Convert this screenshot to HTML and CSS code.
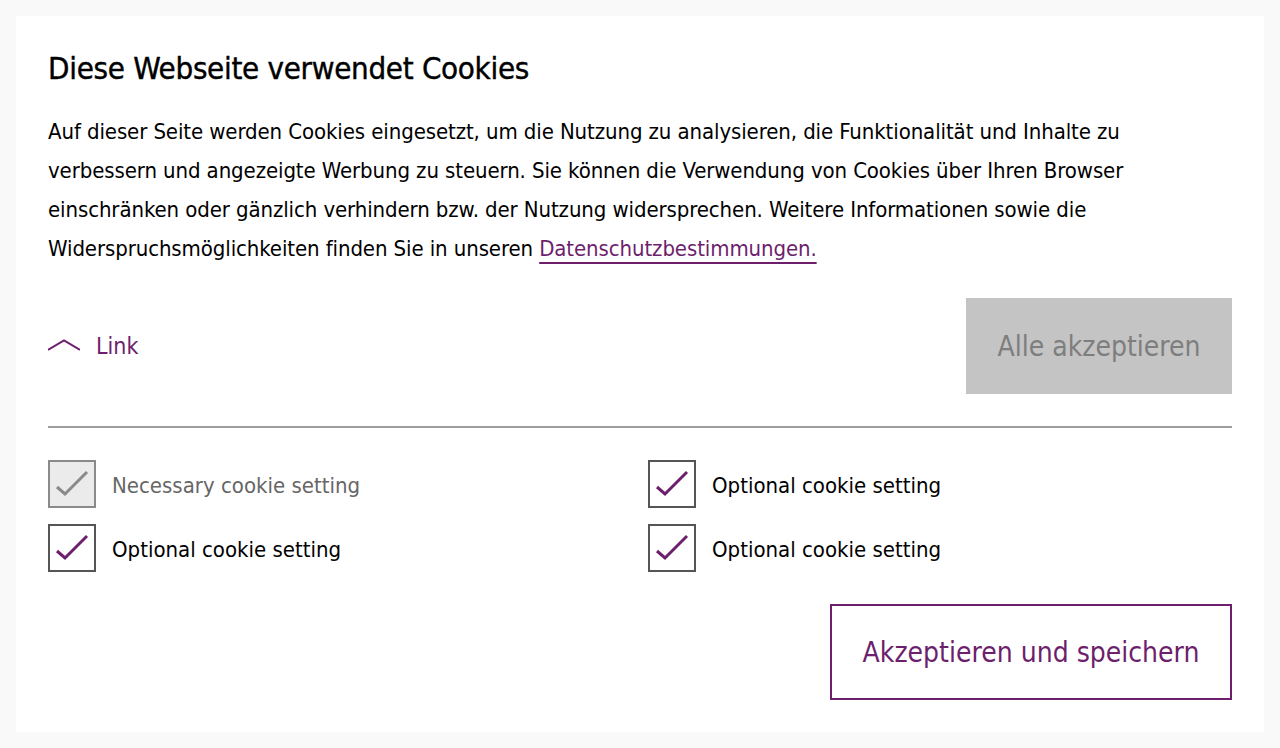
FILE: index.html
```html
<!DOCTYPE html>
<html lang="de">
<head>
<meta charset="utf-8">
<title>Cookies</title>
<link rel="stylesheet" href="styles.css">
</head>
<body>
<div class="card">
  <h1 class="title">Diese Webseite verwendet Cookies</h1>
  <p class="text">Auf dieser Seite werden Cookies eingesetzt, um die Nutzung zu analysieren, die Funktionalität und Inhalte zu verbessern und angezeigte Werbung zu steuern. Sie können die Verwendung von Cookies über Ihren Browser einschränken oder gänzlich verhindern bzw. der Nutzung widersprechen. Weitere Informationen sowie die Widerspruchsmöglichkeiten finden Sie in unseren <a class="policy" href="#">Datenschutzbestimmungen.</a></p>
  <div class="actions">
    <a class="toggle" href="#">
      <svg class="chevron" width="32" height="12" viewBox="0 0 32 12"><polyline points="0,11 16,1.5 32,11" fill="none" stroke="#6d1f6d" stroke-width="2"/></svg>
      <span>Link</span>
    </a>
    <button class="btn btn-disabled" type="button">Alle akzeptieren</button>
  </div>
  <hr class="divider">
  <div class="options">
    <label class="option disabled">
      <span class="box"><svg width="44" height="44" viewBox="0 0 44 44"><polyline points="7,25 15,32 37,10" fill="none" stroke="#8a8a8a" stroke-width="3"/></svg></span>
      <span class="label">Necessary cookie setting</span>
    </label>
    <label class="option">
      <span class="box"><svg width="44" height="44" viewBox="0 0 44 44"><polyline points="7,25 15,32 37,10" fill="none" stroke="#6d1f6d" stroke-width="3"/></svg></span>
      <span class="label">Optional cookie setting</span>
    </label>
    <label class="option">
      <span class="box"><svg width="44" height="44" viewBox="0 0 44 44"><polyline points="7,25 15,32 37,10" fill="none" stroke="#6d1f6d" stroke-width="3"/></svg></span>
      <span class="label">Optional cookie setting</span>
    </label>
    <label class="option">
      <span class="box"><svg width="44" height="44" viewBox="0 0 44 44"><polyline points="7,25 15,32 37,10" fill="none" stroke="#6d1f6d" stroke-width="3"/></svg></span>
      <span class="label">Optional cookie setting</span>
    </label>
  </div>
  <div class="footer">
    <button class="btn btn-outline" type="button">Akzeptieren und speichern</button>
  </div>
</div>
</body>
</html>
```
FILE: styles.css
```css
* { box-sizing: border-box; }
html, body { margin: 0; padding: 0; }
body {
  background: #f9f9f9;
  padding: 16px;
  font-family: "DejaVu Sans Condensed", "Liberation Sans", sans-serif;
  color: #000;
}
.card {
  background: #fff;
  padding: 32px;
  min-height: 716px;
}
.title {
  margin: 0 0 24px;
  font-size: 31px;
  line-height: 40px;
  font-weight: 400;
  letter-spacing: -0.3px;
  -webkit-text-stroke: 0.4px #000;
}
.text {
  margin: 0;
  font-size: 22px;
  line-height: 39px;
  font-weight: 400;
  letter-spacing: -0.1px;
}
.policy {
  color: #6d1f6d;
  text-decoration: underline;
  text-decoration-thickness: 2px;
  text-underline-offset: 6px;
}
.actions {
  margin-top: 30px;
  display: flex;
  justify-content: space-between;
  align-items: center;
}
.toggle {
  display: flex;
  align-items: center;
  gap: 16px;
  color: #6d1f6d;
  text-decoration: none;
  font-size: 23px;
}
.chevron { display: block; margin-top: -2px; }
.btn {
  font-family: inherit;
  font-size: 28px;
  height: 96px;
  padding: 0 24px;
  background: none;
  border: 0;
  cursor: pointer;
  white-space: nowrap;
}
.btn-disabled {
  background: #c4c4c4;
  color: #7e7e7e;
  width: 266px;
}
.divider {
  margin: 32px 0 32px;
  border: 0;
  height: 2px;
  background: #9e9e9e;
}
.options {
  display: grid;
  grid-template-columns: 1fr 1fr;
  column-gap: 16px;
  row-gap: 16px;
}
.option:nth-child(1) { grid-column: 1; grid-row: 1; }
.option:nth-child(2) { grid-column: 1; grid-row: 2; }
.option:nth-child(3) { grid-column: 2; grid-row: 1; }
.option:nth-child(4) { grid-column: 2; grid-row: 2; }
.option {
  display: flex;
  align-items: center;
  gap: 16px;
  font-size: 22px;
}
.label { padding-top: 2px; }
.box {
  width: 48px;
  height: 48px;
  border: 2px solid #555;
  display: flex;
  align-items: center;
  justify-content: center;
  flex: none;
}
.box svg { display: block; }
.option.disabled .box {
  background: #ebebeb;
  border-color: #8a8a8a;
}
.option.disabled .label { color: #666; }
.footer {
  margin-top: 32px;
  display: flex;
  justify-content: flex-end;
}
.btn-outline {
  border: 2px solid #6d1f6d;
  color: #6d1f6d;
  width: 402px;
}
```
